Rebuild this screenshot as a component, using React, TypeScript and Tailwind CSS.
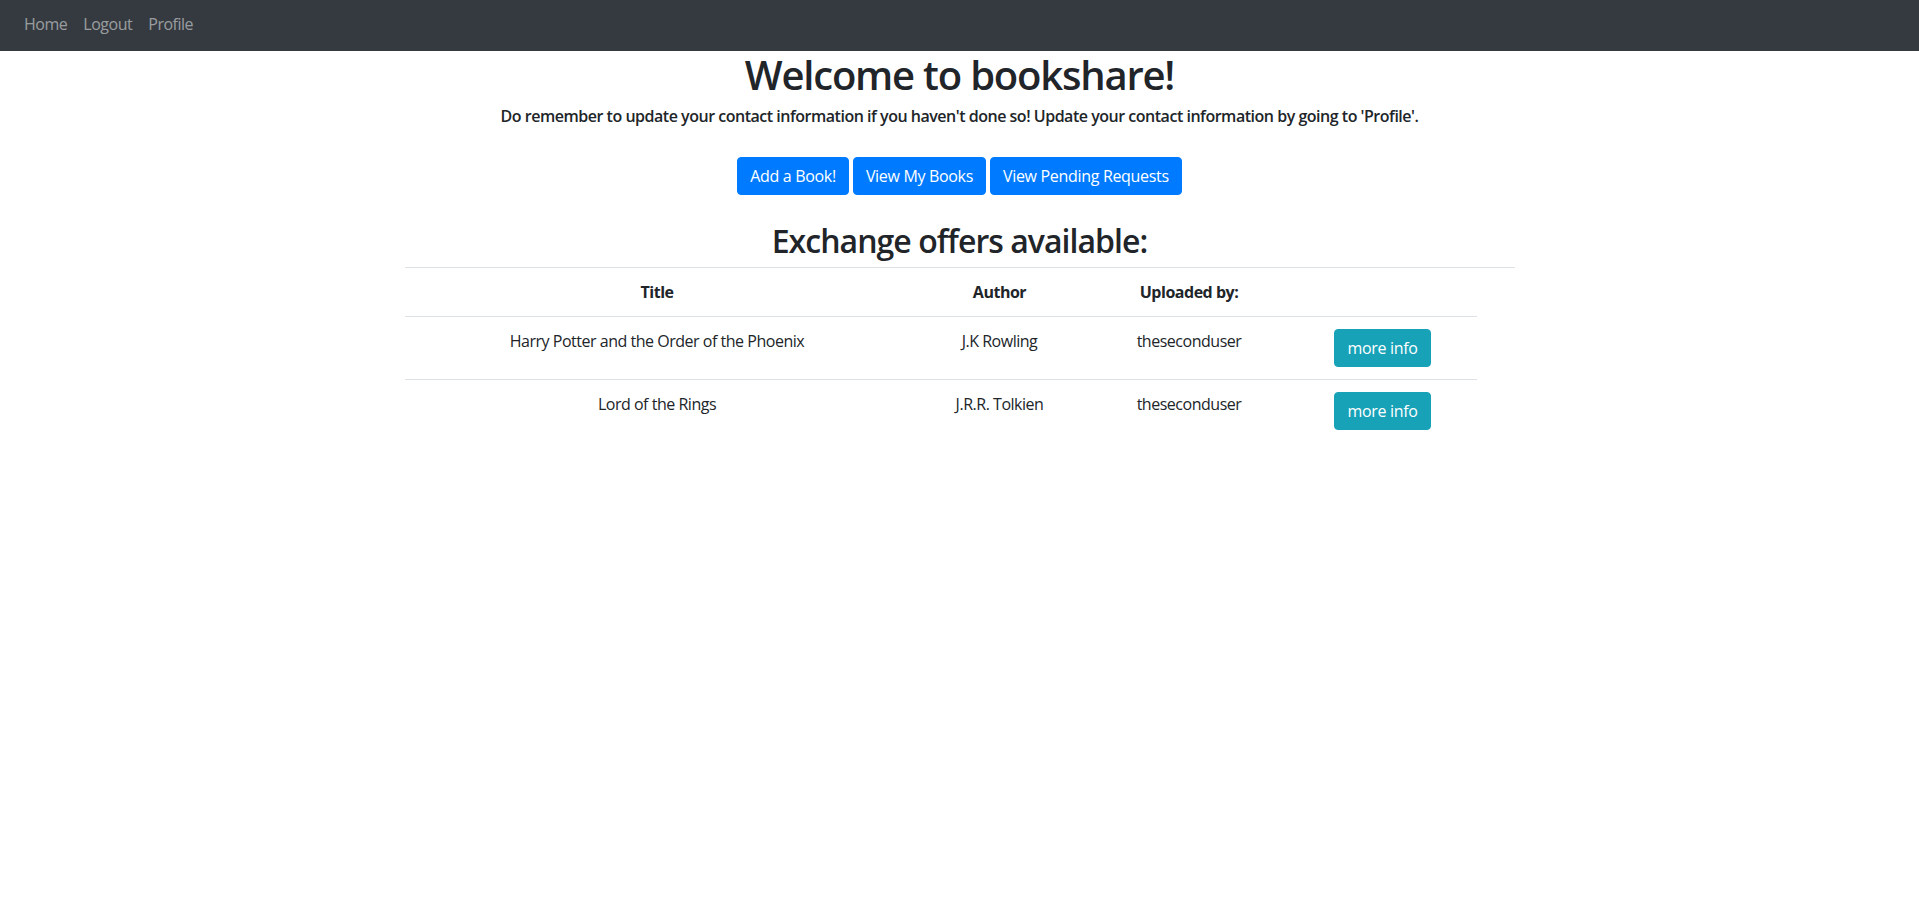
import React from "react";

const rows = [
  { title: "Harry Potter and the Order of the Phoenix", author: "J.K Rowling", user: "theseconduser" },
  { title: "Lord of the Rings", author: "J.R.R. Tolkien", user: "theseconduser" },
];

export default function App() {
  return (
    <div
      className="min-h-[903px] bg-white text-[#212529] tracking-[-0.03em]"
      style={{ fontFamily: '"Open Sans", "Noto Sans", sans-serif' }}
    >
      <nav className="h-[51px] bg-[#343a40] flex items-center px-4 pb-[4px]">
        {["Home", "Logout", "Profile"].map((l) => (
          <a key={l} href="#" className="px-2 text-[16px] leading-6 text-[rgba(255,255,255,0.5)]">
            {l}
          </a>
        ))}
      </nav>
      <main className="w-[1110px] mx-auto flex flex-col items-center">
        <h1 className="text-[40px] font-semibold leading-[48px] text-center tracking-[-0.03em]">Welcome to bookshare!</h1>
        <h6 className="mt-[8px] text-[16px] font-semibold leading-[19px] text-center">
          Do remember to update your contact information if you haven't done so! Update your contact information by going to 'Profile'.
        </h6>
        <div className="mt-[31px] flex gap-[4px]">
          {["Add a Book!", "View My Books", "View Pending Requests"].map((b) => (
            <button
              key={b}
              className="h-[38px] px-3 rounded-[4px] bg-[#007bff] border border-[#007bff] text-white text-[16px] leading-6 tracking-[-0.02em]"
            >
              {b}
            </button>
          ))}
        </div>
        <h2 className="mt-[27px] text-[32px] font-semibold leading-[38px] text-center tracking-[-0.03em]">
          Exchange offers available:
        </h2>
        <div className="mt-[7px] w-[1110px] border-t border-[#dee2e6]">
          <div className="w-[1072px]">
            <div className="grid grid-cols-[505px_180px_199px_188px] border-b border-[#dee2e6] font-bold text-[16px] leading-6">
              <div className="p-3 text-center">Title</div>
              <div className="p-3 text-center">Author</div>
              <div className="p-3 text-center">Uploaded by:</div>
              <div className="p-3 text-center"></div>
            </div>
            {rows.map((r, i) => (
              <div
                key={i}
                className={
                  "grid grid-cols-[505px_180px_199px_188px] text-[16px] leading-6 " +
                  (i < rows.length - 1 ? "border-b border-[#dee2e6]" : "")
                }
              >
                <div className="p-3 text-center">{r.title}</div>
                <div className="p-3 text-center">{r.author}</div>
                <div className="p-3 text-center">{r.user}</div>
                <div className="p-3 flex justify-center items-start">
                  <button className="h-[38px] px-3 rounded-[4px] bg-[#17a2b8] border border-[#17a2b8] text-white text-[16px] leading-6 tracking-[-0.02em]">
                    more info
                  </button>
                </div>
              </div>
            ))}
          </div>
        </div>
      </main>
    </div>
  );
}
